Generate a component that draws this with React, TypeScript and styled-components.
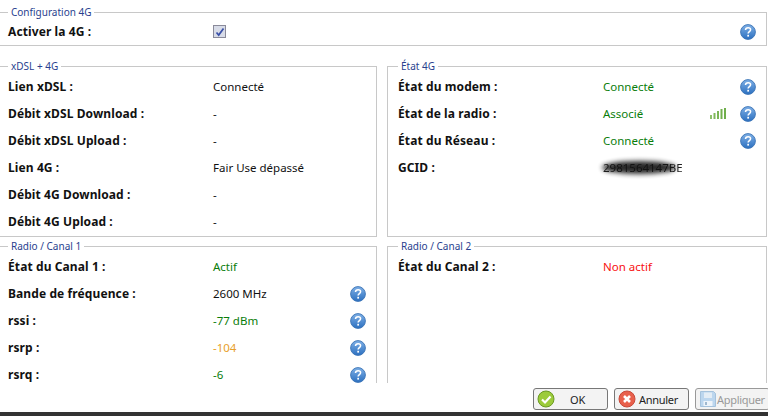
import React from 'react';
import styled, { createGlobalStyle } from 'styled-components';

const GlobalStyle = createGlobalStyle`
  html, body {
    margin: 0;
    padding: 0;
    height: 416px;
    overflow: hidden;
    background: #fff;
  }

  body {
    font-family: 'Noto Sans', sans-serif;
    font-size: 12px;
    color: #111;
  }
`;

function HelpIcon() {
  return (
    <HelpSvg viewBox="0 0 16 16">
      <defs>
        <linearGradient id="helpFill" x1="0" y1="0" x2="0" y2="1">
          <stop offset="0" stopColor="#7fb0e6" />
          <stop offset="1" stopColor="#2c70c0" />
        </linearGradient>
      </defs>
      <circle cx="8" cy="8" r="7.4" fill="url(#helpFill)" stroke="#3b74b6" strokeWidth="0.9" />
      <path d="M5.5 6.1c0-1.5 1.1-2.4 2.6-2.4s2.5.9 2.5 2.1c0 1.9-2.5 1.8-2.5 3.8" fill="none" stroke="#fff" strokeWidth="1.5" />
      <rect x="7.3" y="10.8" width="1.7" height="1.8" fill="#fff" />
    </HelpSvg>
  );
}

function SignalIcon() {
  return (
    <SignalSvg viewBox="0 0 17 11">
      <rect x="0" y="7" width="2" height="4" fill="#8fc06a" />
      <rect x="3.5" y="5" width="2" height="6" fill="#80b85c" />
      <rect x="7" y="3" width="2" height="8" fill="#7ab555" />
      <rect x="10.5" y="1" width="2" height="10" fill="#72b04e" />
      <rect x="14" y="0" width="2" height="11" fill="#6fae4b" />
    </SignalSvg>
  );
}

function OkIcon() {
  return (
    <ButtonSvg viewBox="0 0 18 18">
      <circle cx="9" cy="9" r="8" fill="#9ccb3b" stroke="#6b9a22" />
      <path d="M5 9.5l3 3 5.5-6" fill="none" stroke="#fff" strokeWidth="2.2" />
    </ButtonSvg>
  );
}

function CancelIcon() {
  return (
    <ButtonSvg viewBox="0 0 18 18">
      <circle cx="9" cy="9" r="8" fill="#e8604c" stroke="#c8493a" />
      <path d="M6 6l6 6M12 6l-6 6" fill="none" stroke="#fff" strokeWidth="2.6" />
    </ButtonSvg>
  );
}

function SaveIcon() {
  return (
    <ButtonSvg viewBox="0 0 18 18">
      <path d="M1.5 1.5h13l2 2v13h-15z" fill="#bcd6ee" stroke="#a5c2dc" />
      <rect x="5" y="2.5" width="8" height="5.5" fill="#e4edf5" />
      <rect x="4.5" y="11" width="9" height="5" fill="#eef4fa" />
      <rect x="6" y="12" width="2" height="3" fill="#9fb8cf" />
    </ButtonSvg>
  );
}

function CheckMark() {
  return (
    <CheckSvg viewBox="0 0 10 10">
      <path d="M1.5 5.5l2.2 2.6L8.5 1.5" fill="none" stroke="#3a50a8" strokeWidth="1.7" />
    </CheckSvg>
  );
}

type RowProps = {
  label: string;
  value?: React.ReactNode;
  tone?: 'green' | 'orange' | 'red';
  help?: boolean;
  extra?: React.ReactNode;
};

function Row({ label, value, tone, help, extra }: RowProps) {
  return (
    <RowBox>
      <Label>{label}</Label>
      <Value $tone={tone}>{value}</Value>
      <Extra>{extra}</Extra>
      <HelpSlot>{help && <HelpIcon />}</HelpSlot>
    </RowBox>
  );
}

export default function App() {
  return (
    <Page>
      <GlobalStyle />
      <Main>
        <TopPanel>
          <PanelTitle $tight>Configuration 4G</PanelTitle>
          <Row label="Activer la 4G :" value={<CheckBox><CheckMark /></CheckBox>} help />
        </TopPanel>

        <Columns>
          <TallPanel>
            <PanelTitle>xDSL + 4G</PanelTitle>
            <Row label="Lien xDSL :" value="Connecté" />
            <Row label="Débit xDSL Download :" value="-" />
            <Row label="Débit xDSL Upload :" value="-" />
            <Row label="Lien 4G :" value="Fair Use dépassé" />
            <Row label="Débit 4G Download :" value="-" />
            <Row label="Débit 4G Upload :" value="-" />
          </TallPanel>

          <TallPanel>
            <PanelTitle>État 4G</PanelTitle>
            <Row label="État du modem :" value="Connecté" tone="green" help />
            <Row label="État de la radio :" value="Associé" tone="green" extra={<SignalIcon />} help />
            <Row label="État du Réseau :" value="Connecté" tone="green" help />
            <Row label="GCID :" value={<Redacted>2981564147BE</Redacted>} />
          </TallPanel>

          <Panel>
            <PanelTitle>Radio / Canal 1</PanelTitle>
            <Row label="État du Canal 1 :" value="Actif" tone="green" />
            <Row label="Bande de fréquence :" value="2600 MHz" help />
            <Row label="rssi :" value="-77 dBm" tone="green" help />
            <Row label="rsrp :" value="-104" tone="orange" help />
            <Row label="rsrq :" value="-6" tone="green" help />
          </Panel>

          <Panel>
            <PanelTitle>Radio / Canal 2</PanelTitle>
            <Row label="État du Canal 2 :" value="Non actif" tone="red" />
          </Panel>
        </Columns>
      </Main>

      <Footer>
        <ActionButton>
          <OkIcon />
          <ButtonLabel>OK</ButtonLabel>
        </ActionButton>
        <ActionButton>
          <CancelIcon />
          <ButtonLabel>Annuler</ButtonLabel>
        </ActionButton>
        <ActionButton disabled>
          <SaveIcon />
          <ButtonLabel>Appliquer</ButtonLabel>
        </ActionButton>
      </Footer>
      <BottomBar />
    </Page>
  );
}

const Page = styled.div`
  display: flex;
  flex-direction: column;
  width: 768px;
  height: 416px;
  overflow: hidden;
`;

const Main = styled.div`
  height: 383px;
  padding-top: 5px;
  box-sizing: border-box;
  overflow: hidden;
  margin-left: -2px;
  display: flex;
  flex-direction: column;
  gap: 13px;
`;

const Panel = styled.fieldset`
  margin: 0;
  padding: 0 10px 0 9px;
  min-width: 0;
  box-sizing: border-box;
  border: 1px solid #c8c8c8;
`;

const TopPanel = styled(Panel)`
  width: 769px;
  height: 43px;
`;

const TallPanel = styled(Panel)`
  height: 178px;
`;

const PanelTitle = styled.legend<{ $tight?: boolean }>`
  margin: 0 0 ${(p) => (p.$tight ? '-1px' : '0')} 0;
  padding: 0 3px;
  height: 14px;
  line-height: 14px;
  font-size: 10px;
  color: #2a3f8f;
`;

const Columns = styled.div`
  display: grid;
  grid-template-columns: 379px 380px;
  column-gap: 10px;
  row-gap: 2px;

  > fieldset:nth-child(even) {
    padding-left: 10px;
  }
`;

const RowBox = styled.div`
  display: grid;
  grid-template-columns: 205px 1fr auto 16px;
  align-items: center;
  height: 27px;
`;

const Label = styled.span`
  font-weight: bold;
  letter-spacing: 0.1px;
  white-space: nowrap;
`;

const toneColors = { green: '#0a7d0a', orange: '#e8a02a', red: '#f81010' };

const Value = styled.span<{ $tone?: 'green' | 'orange' | 'red' }>`
  font-size: 11.5px;
  color: ${(p) => (p.$tone ? toneColors[p.$tone] : '#111')};
  white-space: nowrap;
`;

const Extra = styled.span`
  display: flex;
  margin-right: 13px;
`;

const HelpSlot = styled.span`
  display: flex;
  width: 16px;
`;

const HelpSvg = styled.svg`
  width: 16px;
  height: 16px;
`;

const SignalSvg = styled.svg`
  width: 17px;
  height: 11px;
  flex: none;
`;

const CheckBox = styled.span`
  display: flex;
  align-items: center;
  justify-content: center;
  width: 11px;
  height: 11px;
  border: 1px solid #8a8a9a;
  background: #d8dce8;
`;

const CheckSvg = styled.svg`
  width: 10px;
  height: 10px;
`;

const Redacted = styled.span`
  position: relative;
  display: inline-block;
  color: #222;
  filter: blur(0.4px);

  &::after {
    content: '';
    position: absolute;
    inset: 1px 7px 1px -1px;
    border-radius: 50%;
    background: #111;
    filter: blur(2.5px);
    opacity: 0.9;
  }
`;

const Footer = styled.div`
  display: flex;
  justify-content: flex-end;
  gap: 6px;
  margin-right: -2px;
  padding-top: 5px;
`;

const ActionButton = styled.button`
  display: flex;
  align-items: center;
  width: 75px;
  height: 22px;
  padding: 0 3px;
  border: 1px solid #777;
  border-radius: 3px;
  background: #f3f3f3;
  font: 11px 'Noto Sans', sans-serif;
  letter-spacing: -0.3px;
  color: #222;

  &:disabled {
    border-color: #999;
    color: #999;
  }
`;

const ButtonSvg = styled.svg`
  width: 18px;
  height: 18px;
  flex: none;
`;

const ButtonLabel = styled.span`
  flex: 1;
  padding-right: 4px;
  text-align: center;
  white-space: nowrap;
`;

const BottomBar = styled.div`
  height: 4px;
  margin-top: auto;
  background: #333;
`;
